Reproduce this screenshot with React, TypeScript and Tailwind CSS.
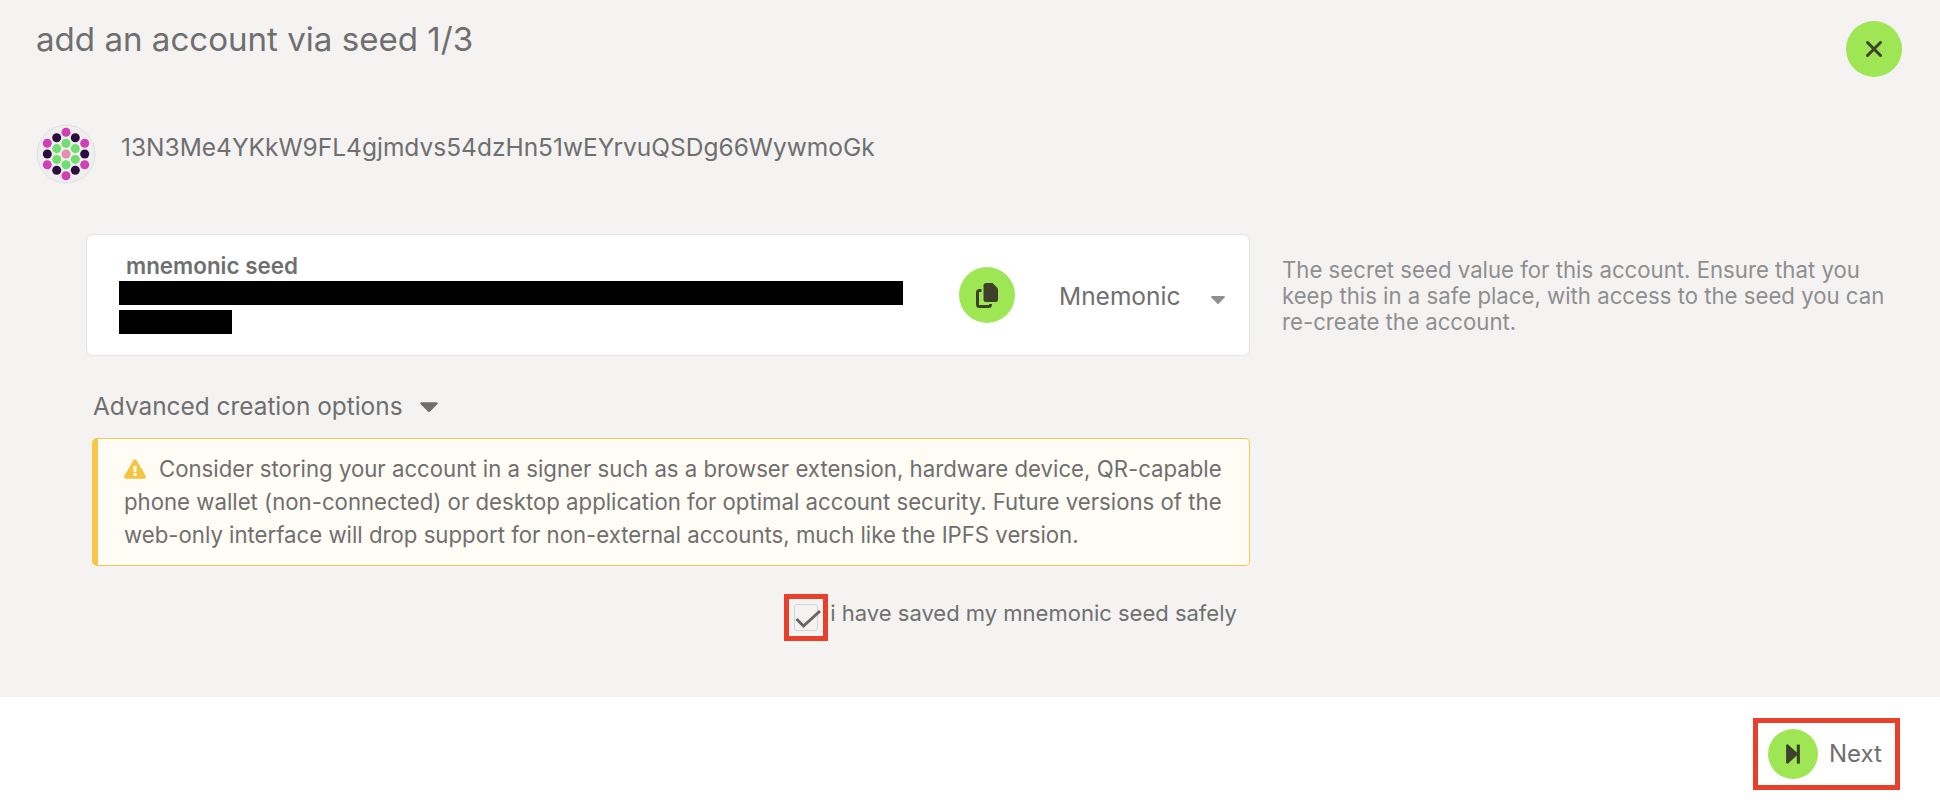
import React from "react";
import { FaCaretDown, FaExclamationTriangle, FaStepForward } from "react-icons/fa";

const PINK = "#d03fb3";
const DARK = "#2c0e3d";
const GREEN = "#6fdf6f";

const dots: [number, number, string][] = [
  [0, -21.7, PINK],
  [-9.3, -16.2, DARK],
  [9.3, -16.2, DARK],
  [-18.7, -10.8, PINK],
  [0, -10.8, GREEN],
  [18.7, -10.8, PINK],
  [-9.3, -5.4, GREEN],
  [9.3, -5.4, GREEN],
  [-18.7, 0, DARK],
  [0, 0, "#e38fae"],
  [18.7, 0, DARK],
  [-9.3, 5.4, GREEN],
  [9.3, 5.4, GREEN],
  [-18.7, 10.8, PINK],
  [0, 10.8, GREEN],
  [18.7, 10.8, PINK],
  [-9.3, 16.2, DARK],
  [9.3, 16.2, DARK],
  [0, 21.7, PINK],
];

function Identicon() {
  return (
    <svg width="60" height="60" viewBox="-30 -30 60 60" className="shrink-0 mt-[8px]">
      <circle r="29" fill="#eeeeee" stroke="#e0e0e0" strokeWidth="1" />
      {dots.map(([x, y, fill], i) => (
        <circle key={i} cx={x} cy={y} r="4.5" fill={fill} />
      ))}
    </svg>
  );
}

function CopyIcon() {
  return (
    <svg width="22" height="25" viewBox="0 0 22 25" fill="none">
      <path
        d="M10 0h6.5L22 5.5v11a2.5 2.5 0 0 1-2.5 2.5H10a2.5 2.5 0 0 1-2.5-2.5v-14A2.5 2.5 0 0 1 10 0z"
        fill="currentColor"
      />
      <path
        d="M5.5 7.5h-2a2 2 0 0 0-2 2v12a2 2 0 0 0 2 2h9a2 2 0 0 0 2-2V21"
        stroke="currentColor"
        strokeWidth="3"
      />
    </svg>
  );
}

export default function App() {
  return (
    <div className="h-[812px] w-full flex flex-col bg-white text-[#6f6f6f] font-['Inter','Liberation_Sans',sans-serif]">
      <div className="h-[697px] bg-[#f4f3f2] flex flex-col">
        <div className="flex justify-between pl-[36px] pr-[38px] pt-[21px] h-[116px]">
          <h1 className="text-[33.1px] leading-[39px] -mt-[1px]">add an account via seed 1/3</h1>
          <div className="w-14 h-14 rounded-full bg-[#9fe655] text-[#3c4229] flex items-center justify-center">
            <svg width="18" height="18" viewBox="0 0 18 18" stroke="currentColor" strokeWidth="3" strokeLinecap="round">
              <path d="M2.5 2.5l13 13M15.5 2.5l-13 13" />
            </svg>
          </div>
        </div>

        <div className="flex items-start gap-[25px] pl-[36px] h-[78px]">
          <Identicon />
          <span className="text-[24.5px] leading-[30px] mt-[16px]">13N3Me4YKkW9FL4gjmdvs54dzHn51wEYrvuQSDg66WywmoGk</span>
        </div>

        <div className="flex pl-[86px] mt-[40px]">
          <div className="w-[1164px] shrink-0">
            <div className="h-[122px] bg-white border border-[#e4e4ec] rounded-[7px] flex items-center">
              <div className="w-[872px] pl-[32px] shrink-0">
                <div className="pl-[7px] text-[22.4px] leading-[20px] font-semibold">mnemonic seed</div>
                <div className="h-[24px] w-[784px] bg-black mt-[5px]" />
                <div className="h-[24px] w-[113px] bg-black mt-[5px]" />
              </div>
              <div className="w-14 h-14 rounded-full bg-[#9fe655] text-[#3c4229] flex items-center justify-center shrink-0">
                <CopyIcon />
              </div>
              <span className="ml-[44px] mt-[2px] text-[24.5px] leading-[30px]">Mnemonic</span>
              <FaCaretDown size={24} className="ml-[26px] mt-[8px] text-[#8f8f8f]" />
            </div>

            <div className="flex items-center gap-[11px] pl-[7px] mt-[35px] h-[30px]">
              <span className="text-[24.4px] leading-[30px]">Advanced creation options</span>
              <FaCaretDown size={30} />
            </div>

            <div className="ml-[6px] mt-[17px] h-[128px] bg-[#fffcf6] border border-[#f5c84c] border-l-[6px] rounded-[5px] pl-[26px] pr-[20px] pt-[13px] text-[22.2px] leading-[33px]">
              <FaExclamationTriangle size={22} className="inline-block text-[#f5c542] mr-[13px] -mt-[4px]" />
              Consider storing your account in a signer such as a browser extension, hardware device, QR-capable phone wallet (non-connected) or desktop application for optimal account security. Future versions of the web-only interface will drop support for non-external accounts, much like the IPFS version.
            </div>

            <div className="flex justify-end items-start mt-[28px] pr-[13px] h-[47px] gap-[2px]">
              <div className="w-[44px] h-[47px] border-[5px] border-[#e8402a] flex items-center justify-center">
                <div className="w-[24px] h-[27px] border border-[#d4d4d4] rounded-[3px] relative">
                  <svg width="27" height="20" viewBox="0 0 27 20" fill="none" className="absolute left-0 top-[4px]">
                    <path d="M1.5 10l7 7L25 2" stroke="#666666" strokeWidth="3" />
                  </svg>
                </div>
              </div>
              <span className="text-[22px] leading-[28px] mt-[5px]">i have saved my mnemonic seed safely</span>
            </div>
          </div>

          <p className="ml-[32px] mt-[23px] w-[608px] text-[22.2px] leading-[26px] text-[#8f8f8f]">
            The secret seed value for this account. Ensure that you keep this in a safe place, with access to the seed you can re-create the account.
          </p>
        </div>
      </div>

      <div className="flex-1 flex justify-end pr-[40px] pt-[21px]">
        <div className="w-[147px] h-[72px] border-[5px] border-[#e8402a] flex items-center pl-[10px] gap-[11px]">
          <div className="w-[50px] h-[50px] rounded-full bg-[#9fe655] text-[#3c4229] flex items-center justify-center shrink-0">
            <FaStepForward size={22} />
          </div>
          <span className="text-[24px]">Next</span>
        </div>
      </div>
    </div>
  );
}
